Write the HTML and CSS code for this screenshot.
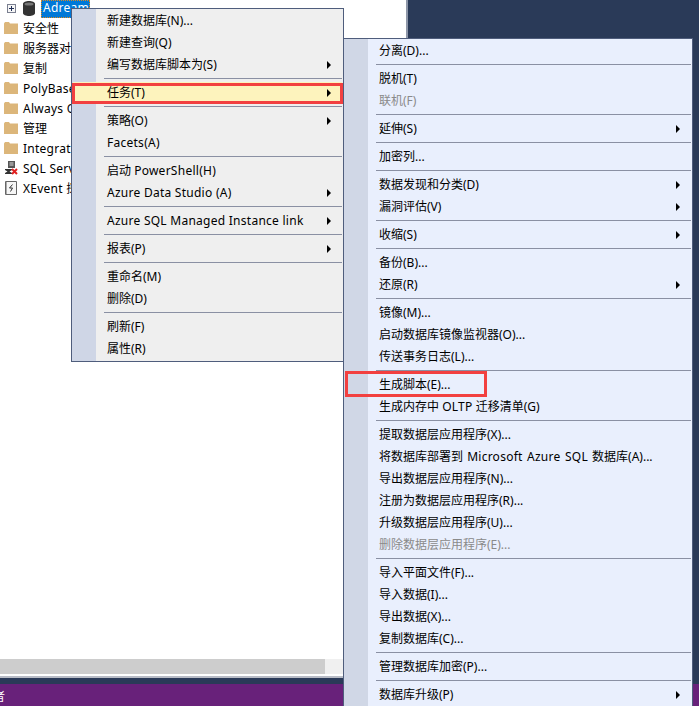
FILE: index.html
```html
<!DOCTYPE html>
<html lang="zh-CN">
<head>
<meta charset="utf-8">
<title>SSMS 任务菜单</title>
<link rel="stylesheet" href="styles.css">
</head>
<body>
<div class="shell">
  <div class="explorer">
    <ul class="tree">
      <li class="node db">
        <svg class="expander" width="9" height="9" viewBox="0 0 9 9"><rect x=".5" y=".5" width="8" height="8" fill="#f6f6f6" stroke="#7a7f90"/><path d="M2 4.500h5M4.500 2v5" stroke="#1f2d55"/></svg>
        <svg class="db-icon" width="12" height="15" viewBox="0 0 12 15"><path d="M0 3C0 1 3 0 6 0s6 1 6 3v9c0 2-3 3-6 3s-6-1-6-3z" fill="#333"/><ellipse cx="6" cy="3" rx="4.500" ry="1.600" fill="#777"/></svg>
        <span class="selected lat">Adream</span>
      </li>
      <li class="node"><svg class="folder" width="14" height="12" viewBox="0 0 14 12"><path d="M0 1.500 1 0h4l1 1.500h8V12H0z" fill="#dcb67a"/></svg><span>安全性</span></li>
      <li class="node"><svg class="folder" width="14" height="12" viewBox="0 0 14 12"><path d="M0 1.500 1 0h4l1 1.500h8V12H0z" fill="#dcb67a"/></svg><span>服务器对象</span></li>
      <li class="node"><svg class="folder" width="14" height="12" viewBox="0 0 14 12"><path d="M0 1.500 1 0h4l1 1.500h8V12H0z" fill="#dcb67a"/></svg><span>复制</span></li>
      <li class="node"><svg class="folder" width="14" height="12" viewBox="0 0 14 12"><path d="M0 1.500 1 0h4l1 1.500h8V12H0z" fill="#dcb67a"/></svg><span class="lat">PolyBase</span></li>
      <li class="node"><svg class="folder" width="14" height="12" viewBox="0 0 14 12"><path d="M0 1.500 1 0h4l1 1.500h8V12H0z" fill="#dcb67a"/></svg><span class="lat">Always On 高可用性</span></li>
      <li class="node"><svg class="folder" width="14" height="12" viewBox="0 0 14 12"><path d="M0 1.500 1 0h4l1 1.500h8V12H0z" fill="#dcb67a"/></svg><span>管理</span></li>
      <li class="node"><svg class="folder" width="14" height="12" viewBox="0 0 14 12"><path d="M0 1.500 1 0h4l1 1.500h8V12H0z" fill="#dcb67a"/></svg><span class="lat">Integration Services 目录</span></li>
      <li class="node"><svg class="folder" width="14" height="14" viewBox="0 0 14 14"><path d="M4 0h7v7H4z" fill="#555"/><path d="M5.500 2h4M5.500 4h4" stroke="#ddd"/><path d="M1 8h7v1L5.500 10.500 8 12v1H1v-1l2.500-1.500L1 9z" fill="#333"/><path d="M8 8l5 5M13 8l-5 5" stroke="#e02020" stroke-width="2"/></svg><span class="lat">SQL Server 代理</span></li>
      <li class="node"><svg class="folder" width="14" height="14" viewBox="0 0 14 14"><path d="M1.500.5h11v13h-11z" fill="#f6f6f6" stroke="#666"/><path d="M2.500 1v12" stroke="#aaa"/><path d="M8.500 3.500 5.500 7h3l-2 3.500" fill="none" stroke="#333"/></svg><span class="lat">XEvent 探查器</span></li>
    </ul>
    <div class="hscroll"><div class="hscroll-thumb"></div></div>
  </div>
  <div class="statusbar"><span class="status-text">者</span></div>

  <div class="menu menu-main">
    <div class="item">新建数据库(N)...</div>
    <div class="item">新建查询(Q)</div>
    <div class="item sub">编写数据库脚本为(S)</div>
    <div class="sep"></div>
    <div class="item sub active">任务(T)</div>
    <div class="sep"></div>
    <div class="item sub">策略(O)</div>
    <div class="item lat">Facets(A)</div>
    <div class="sep"></div>
    <div class="item">启动 <span class="lat">PowerShell(H)</span></div>
    <div class="item sub lat">Azure Data Studio (A)</div>
    <div class="sep"></div>
    <div class="item sub lat">Azure SQL Managed Instance link</div>
    <div class="sep"></div>
    <div class="item sub">报表(P)</div>
    <div class="sep"></div>
    <div class="item">重命名(M)</div>
    <div class="item">删除(D)</div>
    <div class="sep"></div>
    <div class="item">刷新(F)</div>
    <div class="item">属性(R)</div>
  </div>

  <div class="menu menu-tasks">
    <div class="item">分离(D)...</div>
    <div class="sep"></div>
    <div class="item">脱机(T)</div>
    <div class="item off">联机(F)</div>
    <div class="sep"></div>
    <div class="item sub">延伸(S)</div>
    <div class="sep"></div>
    <div class="item">加密列...</div>
    <div class="sep"></div>
    <div class="item sub">数据发现和分类(D)</div>
    <div class="item sub">漏洞评估(V)</div>
    <div class="sep"></div>
    <div class="item sub">收缩(S)</div>
    <div class="sep"></div>
    <div class="item">备份(B)...</div>
    <div class="item sub">还原(R)</div>
    <div class="sep"></div>
    <div class="item">镜像(M)...</div>
    <div class="item">启动数据库镜像监视器(O)...</div>
    <div class="item">传送事务日志(L)...</div>
    <div class="sep"></div>
    <div class="item">生成脚本(E)...</div>
    <div class="item">生成内存中 <span class="lat">OLTP</span> 迁移清单(G)</div>
    <div class="sep"></div>
    <div class="item">提取数据层应用程序(X)...</div>
    <div class="item wide">将数据库部署到 <span class="lat">Microsoft Azure SQL</span> 数据库(A)...</div>
    <div class="item">导出数据层应用程序(N)...</div>
    <div class="item">注册为数据层应用程序(R)...</div>
    <div class="item">升级数据层应用程序(U)...</div>
    <div class="item off">删除数据层应用程序(E)...</div>
    <div class="sep"></div>
    <div class="item">导入平面文件(F)...</div>
    <div class="item">导入数据(I)...</div>
    <div class="item">导出数据(X)...</div>
    <div class="item">复制数据库(C)...</div>
    <div class="sep"></div>
    <div class="item">管理数据库加密(P)...</div>
    <div class="sep"></div>
    <div class="item sub">数据库升级(P)</div>
  </div>

  <div class="mark mark-task"></div>
  <div class="mark mark-script"></div>
</div>
</body>
</html>
```
FILE: styles.css
```css
* { box-sizing: border-box; }
html, body { margin: 0; padding: 0; width: 699px; height: 706px; overflow: hidden; }
body {
  font-family: "Noto Sans", "Noto Sans CJK SC", sans-serif;
  font-size: 12px;
  color: #000;
}
.lat { letter-spacing: .26px; }
.wide { word-spacing: 1px; }
.shell {
  position: relative;
  display: flex; flex-direction: column; justify-content: space-between;
  height: 706px; background: #2a3a58; overflow: hidden;
}
.explorer {
  width: 408px; height: 678px;
  background: #fff;
  border-right: 2px solid #8d96a8;
  border-bottom: 2px solid #b8bcc6;
  display: flex; flex-direction: column; justify-content: space-between;
}
.tree { list-style: none; margin: -2px 0 0; padding: 0 0 0 4px; }
.node { display: flex; align-items: center; height: 20px; white-space: nowrap; }
.node.db { margin-left: 3px; }
.folder { margin-right: 5px; flex: none; }
.expander { margin-right: 7px; flex: none; }
.db-icon { margin-right: 6px; flex: none; }
.selected {
  position: relative; top: 1px;
  background: #0078d7; color: #fff;
  outline: 1px dotted #e08a20; outline-offset: -1px;
  padding: 0 2px; height: 18px; line-height: 16px; width: 49px; overflow: hidden;
}
.hscroll { height: 15px; margin-bottom: 2px; background: #f0f0f0; }
.hscroll-thumb { width: 325px; height: 15px; background: #cdcdcd; }
.statusbar { height: 22px; background: #68217a; color: #fff; line-height: 26px; overflow: hidden; }
.status-text { display: block; margin-left: -7px; }
.menu {
  position: absolute;
  border: 1px solid #4f5d7c;
  padding: 1px;
}
.menu-main {
  left: 71px; top: 8px; width: 273px;
  background: linear-gradient(to right, #cfd6e6 24px, #efefef 24px);
}
.menu-tasks {
  left: 343px; top: 38px; width: 350px;
  background: linear-gradient(to right, #d0d7e6 24px, #e9effd 24px);
}
.item {
  position: relative;
  height: 22px; line-height: 22px;
  padding-left: 34px;
  white-space: nowrap;
}
.item.off { color: #8a8a8a; }
.item.active { background: #fdf3bd; }
.item.sub::after {
  content: "";
  position: absolute; right: 11px; top: 7px;
  border-left: 4px solid #000;
  border-top: 4px solid transparent;
  border-bottom: 4px solid transparent;
}
.sep { height: 6px; margin-left: 31px; padding-top: 2px; }
.sep::before { content: ""; display: block; height: 1px; background: #8a90a3; }
.mark { position: absolute; border: 3px solid #f24040; }
.mark-task { left: 72px; top: 83px; width: 271px; height: 21px; }
.mark-script { left: 345px; top: 371px; width: 142px; height: 26px; }
```
